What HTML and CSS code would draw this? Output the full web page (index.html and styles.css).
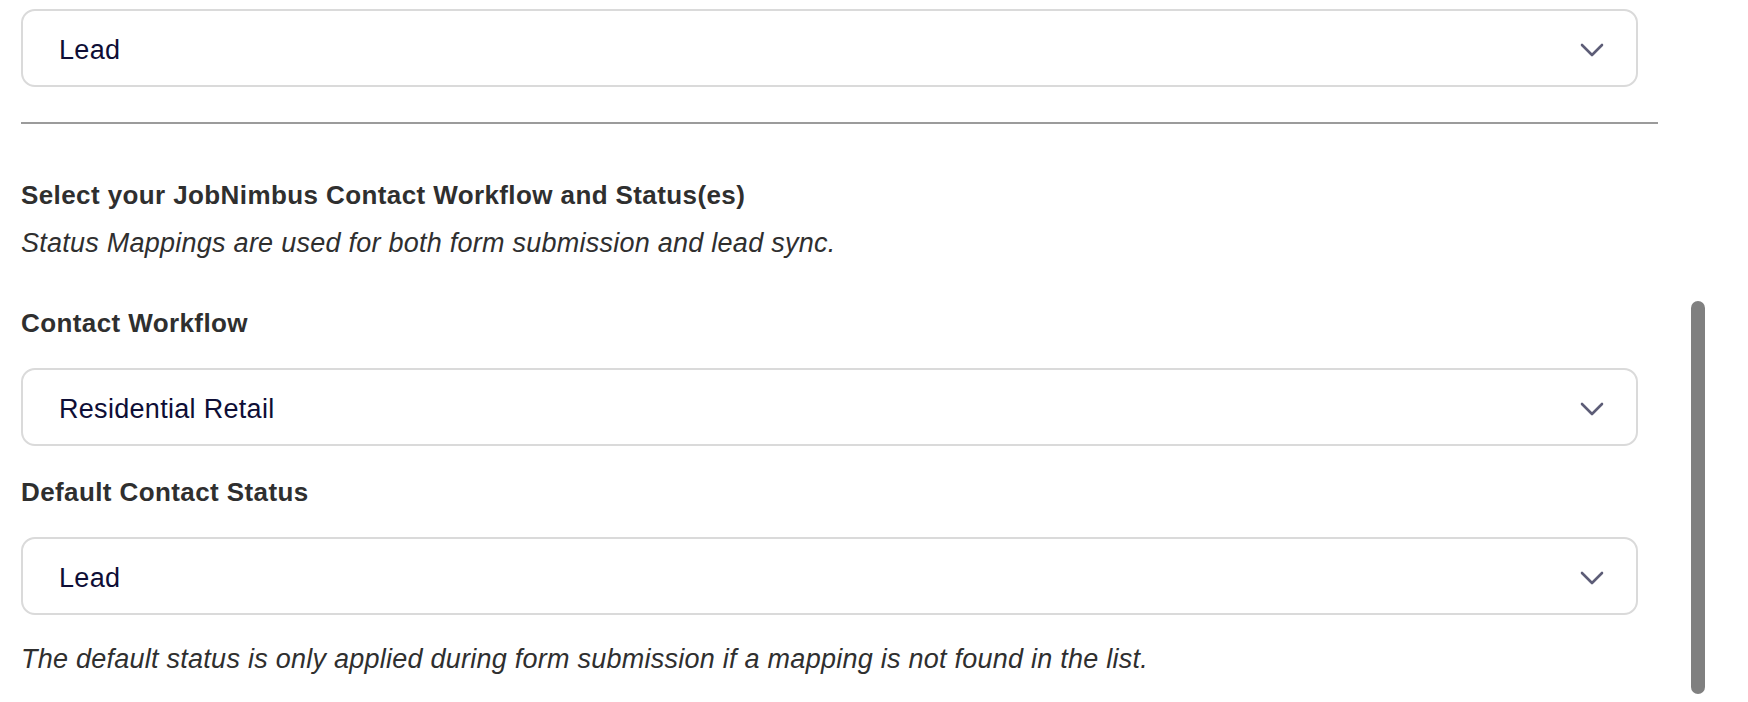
FILE: index.html
```html
<!DOCTYPE html>
<html lang="en">
<head>
<meta charset="utf-8">
<title>JobNimbus Status Mapping</title>
<link rel="stylesheet" href="styles.css">
</head>
<body>
<div class="page">
  <div class="select">
    <span class="select-value">Lead</span>
    <svg class="chevron" viewBox="0 0 24 14" width="24" height="14"><path d="M2 2 L12 12 L22 2" fill="none" stroke="#5d5d77" stroke-width="2.6" stroke-linecap="round" stroke-linejoin="round"/></svg>
  </div>

  <div class="divider"></div>

  <h2 class="heading">Select your JobNimbus Contact Workflow and Status(es)</h2>
  <p class="hint first">Status Mappings are used for both form submission and lead sync.</p>

  <div class="field first-field">
    <label class="label">Contact Workflow</label>
    <div class="select">
      <span class="select-value">Residential Retail</span>
      <svg class="chevron" viewBox="0 0 24 14" width="24" height="14"><path d="M2 2 L12 12 L22 2" fill="none" stroke="#5d5d77" stroke-width="2.6" stroke-linecap="round" stroke-linejoin="round"/></svg>
    </div>
  </div>

  <div class="field">
    <label class="label">Default Contact Status</label>
    <div class="select">
      <span class="select-value">Lead</span>
      <svg class="chevron" viewBox="0 0 24 14" width="24" height="14"><path d="M2 2 L12 12 L22 2" fill="none" stroke="#5d5d77" stroke-width="2.6" stroke-linecap="round" stroke-linejoin="round"/></svg>
    </div>
  </div>

  <p class="hint note">The default status is only applied during form submission if a mapping is not found in the list.</p>
</div>
<div class="scroll-thumb"></div>
</body>
</html>
```

FILE: styles.css
```css
html, body {
  margin: 0;
  padding: 0;
  background: #ffffff;
  overflow: hidden;
}

body {
  font-family: "Liberation Sans", Arial, sans-serif;
  color: #313131;
  height: 702px;
}

.page {
  padding: 9px 0 0 21px;
  width: 1617px;
}

.select {
  box-sizing: border-box;
  height: 78px;
  border: 2px solid #dadada;
  border-radius: 14px;
  display: flex;
  align-items: center;
  justify-content: space-between;
  padding: 4px 32px 0 36px;
  background: #fff;
}

.select-value {
  font-size: 27px;
  line-height: 32px;
  color: #0e0e36;
  letter-spacing: 0.3px;
}

.chevron {
  display: block;
  flex: none;
}

.divider {
  margin-top: 35px;
  width: 1637px;
  height: 2px;
  background: #9b9b9b;
}

.heading {
  margin: 55px 0 0;
  font-size: 26px;
  font-weight: 700;
  line-height: 32px;
  color: #2f2f2f;
  letter-spacing: 0.4px;
}

.hint {
  margin: 0;
  font-size: 27px;
  font-style: italic;
  line-height: 32px;
  color: #2f2f2f;
  letter-spacing: 0.25px;
}

.hint.first {
  margin-top: 16px;
}

.field {
  display: flex;
  flex-direction: column;
  gap: 29px;
  margin-top: 30px;
}

.field.first-field {
  margin-top: 48px;
}

.label {
  font-size: 26px;
  font-weight: 700;
  line-height: 32px;
  color: #2f2f2f;
  letter-spacing: 0.4px;
}

.hint.note {
  margin-top: 28px;
}

.scroll-thumb {
  position: absolute;
  left: 1691px;
  top: 301px;
  width: 14px;
  height: 393px;
  border-radius: 7px;
  background: #808080;
}
```
